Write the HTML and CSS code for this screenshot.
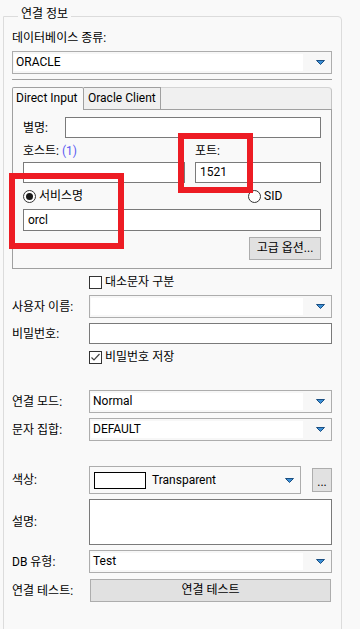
FILE: index.html
```html
<!DOCTYPE html>
<html lang="ko">
<head>
    <meta charset="UTF-8">
    <meta name="viewport" content="width=device-width, initial-scale=1.0">
    <title>연결 정보</title>
    <link rel="stylesheet" href="styles.css">
</head>
<body>
    <fieldset class="group">
        <legend>연결 정보</legend>

        <div class="db-label">데이터베이스 종류:</div>
        <div class="combo db-combo">
            <span class="combo-val">ORACLE</span>
            <svg class="arrow" width="9" height="5" viewBox="0 0 9 5"><path d="M0.5 0.5h8l-4 4z" fill="#3b8fd6" stroke="#1b4f82"/></svg>
        </div>
        <div class="sep"></div>

        <!-- Onglets -->
        <div class="tabs">
            <div class="tab-strip">
                <div class="tab active">Direct Input</div>
                <div class="tab">Oracle Client</div>
                <div class="tab-fill"></div>
            </div>
            <div class="tab-body">
                <div class="alias-row">
                    <span class="alias-label">별명:</span>
                    <div class="input"></div>
                </div>
                <div class="host-grid">
                    <span class="host-label">호스트: <span class="hint">(1)</span></span>
                    <span class="host-label">포트:</span>
                    <div class="input"></div>
                    <div class="input">1521</div>
                </div>
                <div class="radio-row">
                    <label class="radio-item service"><span class="radio checked"></span>서비스명</label>
                    <label class="radio-item"><span class="radio"></span>SID</label>
                </div>
                <div class="input service-input">orcl</div>
                <div class="btn-row">
                    <div class="btn adv-btn">고급 옵션...</div>
                </div>
            </div>
        </div>

        <!-- Champs du formulaire -->
        <div class="row check-row first">
            <label class="check-item"><span class="checkbox"></span>대소문자 구분</label>
        </div>
        <div class="row">
            <span class="lbl">사용자 이름:</span>
            <div class="combo grow">
                <span class="combo-val"></span>
                <svg class="arrow" width="9" height="5" viewBox="0 0 9 5"><path d="M0.5 0.5h8l-4 4z" fill="#3b8fd6" stroke="#1b4f82"/></svg>
            </div>
        </div>
        <div class="row">
            <span class="lbl">비밀번호:</span>
            <div class="input grow"></div>
        </div>
        <div class="row check-row">
            <label class="check-item">
                <span class="checkbox"><svg width="11" height="11" viewBox="0 0 11 11"><path d="M1.5 5.5l2.5 2.5 5.5-6" fill="none" stroke="#444" stroke-width="1.2"/></svg></span>비밀번호 저장
            </label>
        </div>

        <div class="row spaced">
            <span class="lbl">연결 모드:</span>
            <div class="combo grow">
                <span class="combo-val">Normal</span>
                <svg class="arrow" width="9" height="5" viewBox="0 0 9 5"><path d="M0.5 0.5h8l-4 4z" fill="#3b8fd6" stroke="#1b4f82"/></svg>
            </div>
        </div>
        <div class="row">
            <span class="lbl">문자 집합:</span>
            <div class="combo grow">
                <span class="combo-val">DEFAULT</span>
                <svg class="arrow" width="9" height="5" viewBox="0 0 9 5"><path d="M0.5 0.5h8l-4 4z" fill="#3b8fd6" stroke="#1b4f82"/></svg>
            </div>
        </div>

        <div class="row spaced color-row">
            <span class="lbl">색상:</span>
            <div class="color-combo">
                <span class="swatch"></span>
                <span class="color-name">Transparent</span>
                <svg class="arrow" width="9" height="5" viewBox="0 0 9 5"><path d="M0.5 0.5h8l-4 4z" fill="#3b8fd6" stroke="#1b4f82"/></svg>
            </div>
            <div class="btn dots-btn">...</div>
        </div>
        <div class="row">
            <span class="lbl">설명:</span>
            <div class="input grow memo"></div>
        </div>
        <div class="row">
            <span class="lbl">DB 유형:</span>
            <div class="combo grow">
                <span class="combo-val">Test</span>
                <svg class="arrow" width="9" height="5" viewBox="0 0 9 5"><path d="M0.5 0.5h8l-4 4z" fill="#3b8fd6" stroke="#1b4f82"/></svg>
            </div>
        </div>
        <div class="row test-row">
            <span class="lbl">연결 테스트:</span>
            <div class="btn test-btn">연결 테스트</div>
        </div>
    </fieldset>

    <!-- Annotations -->
    <div class="mark mark-port"></div>
    <div class="mark mark-service"></div>
</body>
</html>
```

FILE: styles.css
```css
body {
    margin: 0;
    padding: 0;
    position: relative;
    height: 629px;
    overflow: hidden;
    background-color: #f9f9f9;
    font-family: Roboto, "Noto Sans CJK KR", sans-serif;
    font-size: 12px;
    line-height: 16px;
    color: #000;
}

.group {
    margin: 6px 0 0 3px;
    width: 339px;
    min-height: 700px;
    box-sizing: border-box;
    padding: 0 9px 0 8px;
    border: 1px solid #dcdcdc;
    border-radius: 0 4px 0 0;
}

.group legend {
    margin-left: 6px;
    padding: 0 3px 4px;
    line-height: 16px;
}

.db-label {
    margin-top: 4px;
}

/* Listes deroulantes */
.combo {
    display: flex;
    align-items: center;
    height: 23px;
    box-sizing: border-box;
    padding: 2px 6px 2px 1px;
    border: 1px solid #adadad;
    background-color: #f7f7f7;
}

.db-combo {
    margin-top: 5px;
}

.combo-val {
    flex: 1;
    align-self: stretch;
    padding-left: 2px;
    line-height: 17px;
    background-color: #fff;
    margin-right: 13px;
}

.arrow {
    display: block;
    flex: none;
}

.sep {
    margin-top: 5px;
    border-top: 1px solid #a0a0a0;
}

/* Onglets */
.tabs {
    margin-top: 7px;
}

.tab-strip {
    display: flex;
    align-items: flex-end;
    height: 23px;
    box-sizing: border-box;
    border-bottom: 1px solid #a0a0a0;
}

.tab {
    height: 22px;
    box-sizing: border-box;
    padding-left: 3px;
    border-top: 1px solid #a0a0a0;
    border-right: 1px solid #a0a0a0;
    background-color: #f0f0f0;
    line-height: 20px;
    white-space: nowrap;
}

.tab.active {
    width: 72px;
    height: 23px;
    margin-bottom: -1px;
    border-left: 1px solid #a0a0a0;
    border-radius: 2px 2px 0 0;
    background-color: #f9f9f9;
}

.tab:nth-child(2) {
    width: 77px;
    padding-left: 4px;
}

.tab-fill {
    flex: 1;
    height: 22px;
    box-sizing: border-box;
    border-top: 1px solid #d4d4d4;
    border-right: 1px solid #c4c4c4;
    border-radius: 0 4px 0 0;
    background-color: #f0f0f0;
}

.tab-body {
    padding: 7px 10px 8px;
    border: 1px solid #a0a0a0;
    border-top: none;
}

.input {
    height: 21px;
    box-sizing: border-box;
    padding-left: 4px;
    border: 1px solid #7a7a7a;
    background-color: #fff;
    line-height: 19px;
}

.alias-row {
    display: flex;
    align-items: center;
}

.alias-label {
    width: 42px;
}

.alias-row .input {
    flex: 1;
}

.host-grid {
    display: grid;
    grid-template-columns: 162px 126px;
    column-gap: 10px;
    row-gap: 3px;
    margin-top: 5px;
}

.hint {
    color: #5b5bf2;
}

.radio-row {
    display: flex;
    align-items: center;
    height: 16px;
    margin-top: 5px;
}

.radio-item {
    display: flex;
    align-items: center;
    gap: 3px;
}

.radio-item.service {
    width: 225px;
}

.radio {
    width: 13px;
    height: 13px;
    box-sizing: border-box;
    border: 1px solid #333;
    border-radius: 50%;
    background-color: #fff;
    position: relative;
}

.radio.checked::after {
    content: "";
    position: absolute;
    left: 2px;
    top: 2px;
    width: 7px;
    height: 7px;
    border-radius: 50%;
    background-color: #1a1a1a;
}

.service-input {
    height: 22px;
    margin-top: 5px;
    line-height: 20px;
}

.btn-row {
    display: flex;
    justify-content: flex-end;
    margin-top: 6px;
}

.btn {
    box-sizing: border-box;
    border: 1px solid #adadad;
    background-color: #e1e1e1;
    text-align: center;
}

.adv-btn {
    width: 72px;
    height: 23px;
    line-height: 21px;
}

/* Formulaire */
.row {
    display: flex;
    align-items: center;
    margin-top: 5px;
}

.row.spaced {
    margin-top: 25px;
}

.lbl {
    width: 77px;
    flex: none;
    white-space: nowrap;
}

.grow {
    flex: 1;
}

.check-row {
    height: 16px;
    padding-left: 77px;
}

.check-item {
    display: flex;
    align-items: center;
    gap: 3px;
}

.checkbox {
    display: flex;
    align-items: center;
    justify-content: center;
    width: 13px;
    height: 13px;
    box-sizing: border-box;
    border: 1px solid #333;
    background-color: #fff;
}

.color-combo {
    display: flex;
    align-items: center;
    width: 212px;
    height: 28px;
    box-sizing: border-box;
    padding: 0 6px 0 4px;
    border: 1px solid #adadad;
    background-color: #f9f9f9;
}

.swatch {
    width: 52px;
    height: 17px;
    box-sizing: border-box;
    border: 1px solid #000;
    background-color: #fff;
}

.color-name {
    flex: 1;
    padding-left: 6px;
}

.dots-btn {
    width: 20px;
    height: 24px;
    margin-left: 11px;
    line-height: 26px;
}

.memo {
    height: 46px;
}

.test-row {
    margin-top: 6px;
}

.test-btn {
    flex: 1;
    height: 23px;
    margin: 0 1px;
    line-height: 21px;
}

/* Cadres rouges par-dessus le formulaire */
.mark {
    position: absolute;
    box-sizing: border-box;
    border: 6px solid #ed1c24;
}

.mark-port { left: 178px; top: 133px; width: 75px; height: 60px; }
.mark-service { left: 9px; top: 173px; width: 115px; height: 76px; }
```
